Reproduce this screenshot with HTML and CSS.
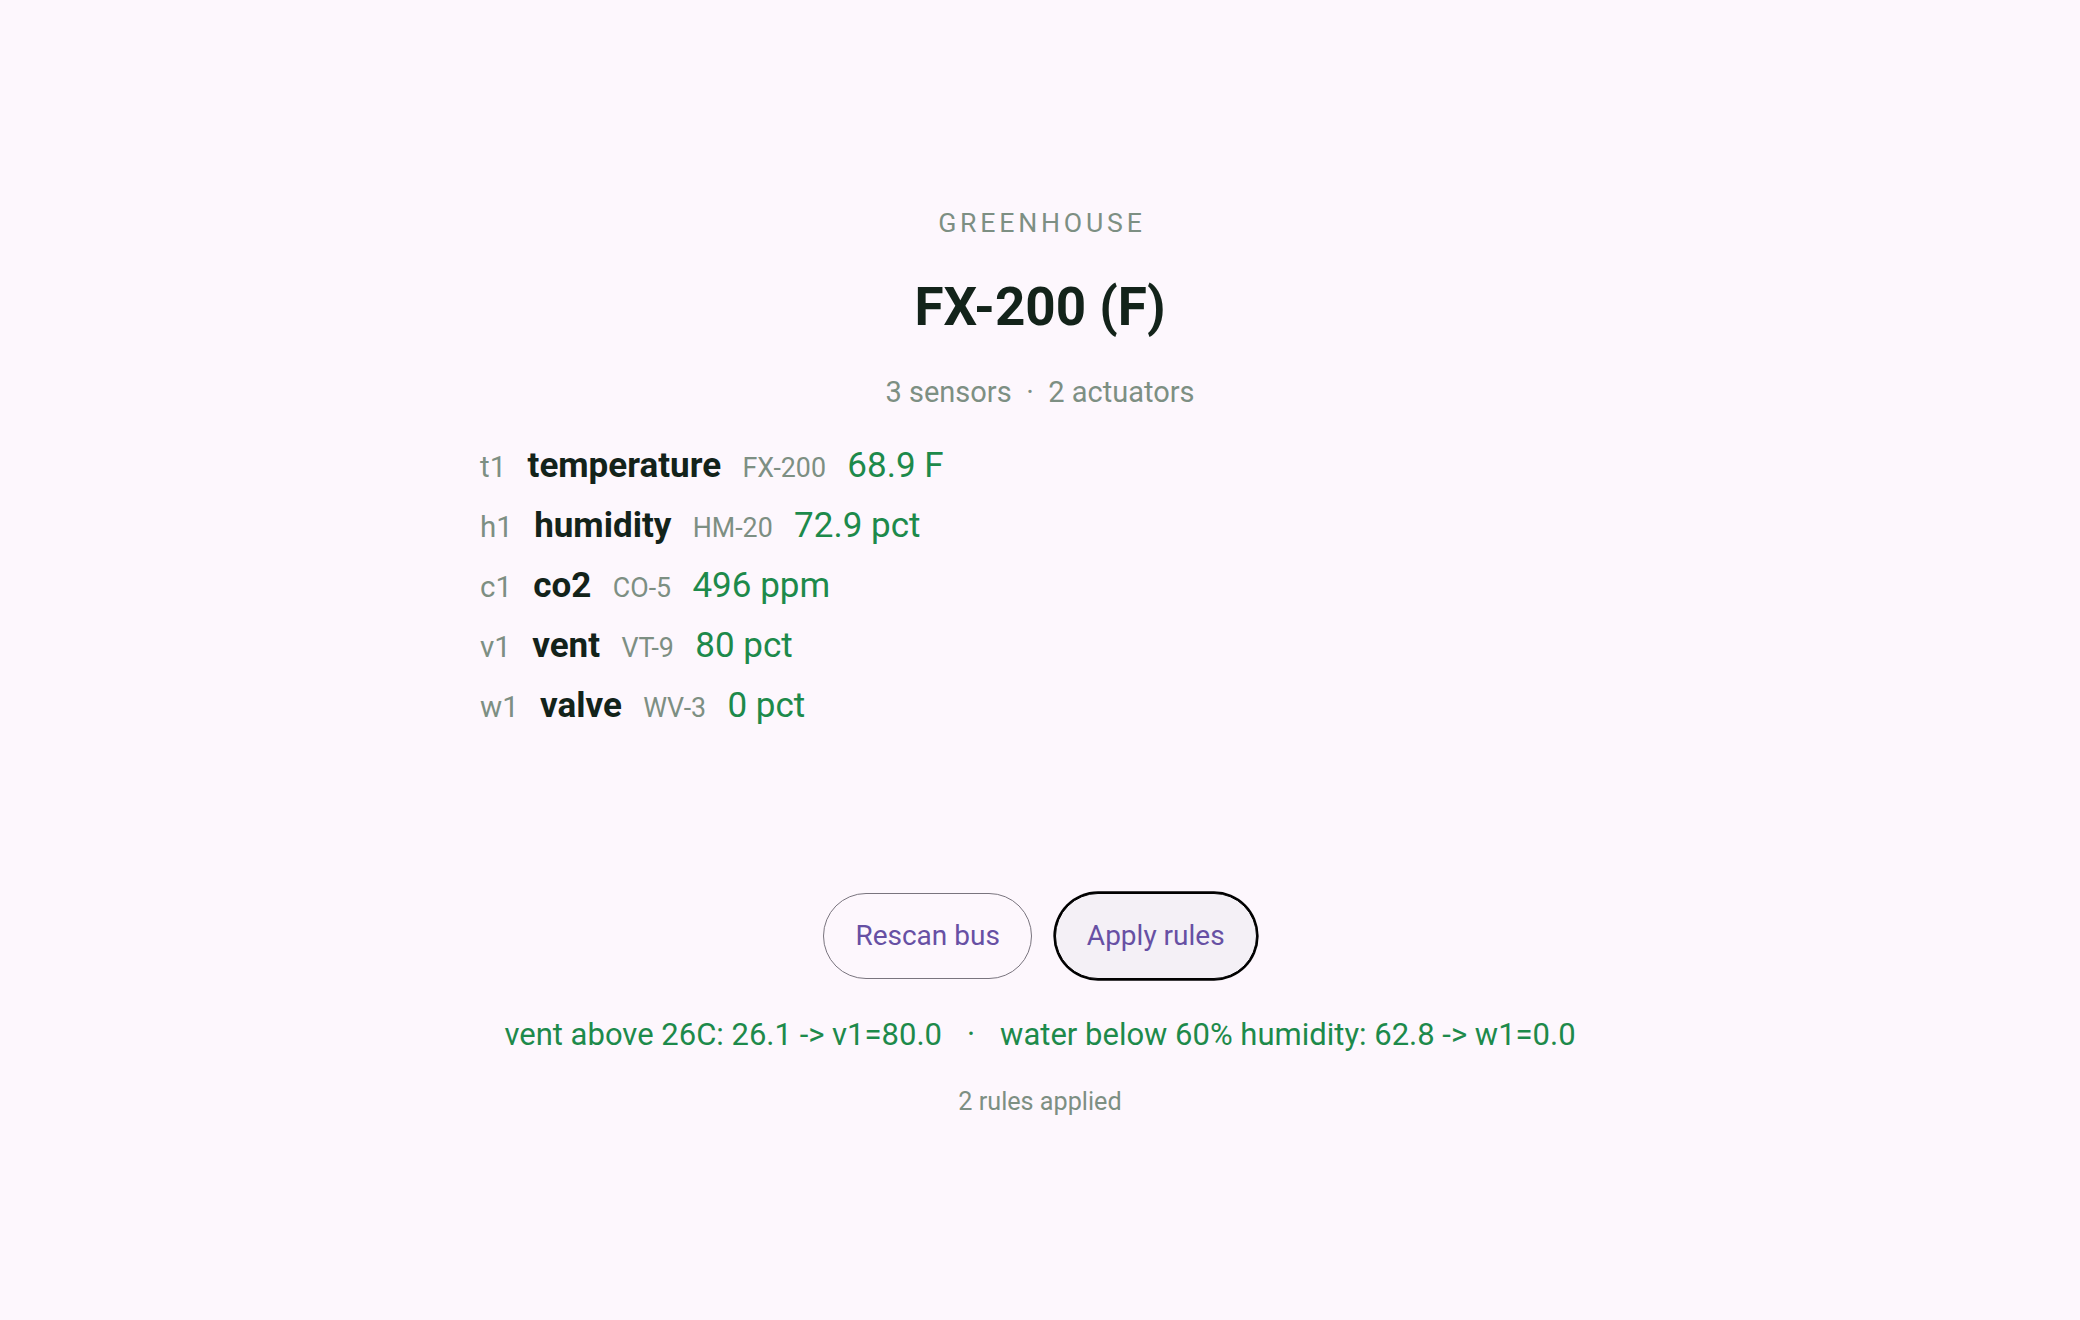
FILE: index.html
```html
<!DOCTYPE html>
<html lang="en">
<head>
<meta charset="utf-8">
<title>Greenhouse – FX-200 (F)</title>
<link rel="stylesheet" href="styles.css">
</head>
<body>
<main class="panel">
  <div class="eyebrow">GREENHOUSE</div>
  <h1 class="title">FX-200 (F)</h1>
  <div class="summary"><span>3 sensors</span><span class="sep">·</span><span>2 actuators</span></div>

  <ul class="devices">
    <li class="device"><span class="id">t1</span><span class="name">temperature</span><span class="model">FX-200</span><span class="value">68.9 F</span></li>
    <li class="device"><span class="id">h1</span><span class="name">humidity</span><span class="model">HM-20</span><span class="value">72.9 pct</span></li>
    <li class="device"><span class="id">c1</span><span class="name">co2</span><span class="model">CO-5</span><span class="value">496 ppm</span></li>
    <li class="device"><span class="id">v1</span><span class="name">vent</span><span class="model">VT-9</span><span class="value">80 pct</span></li>
    <li class="device"><span class="id">w1</span><span class="name">valve</span><span class="model">WV-3</span><span class="value">0 pct</span></li>
  </ul>

  <div class="actions">
    <button class="btn" type="button">Rescan bus</button>
    <button class="btn btn-focus" type="button">Apply rules</button>
  </div>

  <div class="rules"><span>vent above 26C: 26.1 -&gt; v1=80.0</span><span class="sep">·</span><span>water below 60% humidity: 62.8 -&gt; w1=0.0</span></div>
  <div class="count">2 rules applied</div>
</main>
</body>
</html>
```

FILE: styles.css
```css
html, body {
  margin: 0;
  padding: 0;
  background: #fdf7fd;
}

body {
  font-family: Roboto, "Noto Sans", "Liberation Sans", sans-serif;
  color: #13231a;
}

.panel {
  max-width: 1120px;
  margin: 0 auto;
  padding-top: 205px;
  display: flex;
  flex-direction: column;
}

.eyebrow {
  text-align: center;
  font-size: 26.67px;
  line-height: 36px;
  letter-spacing: 3.8px;
  padding-left: 3.8px;
  color: #7d8f83;
  font-weight: 400;
}

.title {
  margin: 34px 0 0;
  text-align: center;
  font-size: 53px;
  line-height: 64px;
  font-weight: 700;
  color: #13231a;
}

.summary {
  margin-top: 33px;
  text-align: center;
  font-size: 29px;
  line-height: 40px;
  color: #7d8f83;
}

.summary .sep {
  margin: 0 14.5px;
}

.devices {
  list-style: none;
  margin: 32.5px 0 0;
  padding: 0;
}

.device {
  display: flex;
  align-items: baseline;
  gap: 21.33px;
  height: 60px;
}

.device span {
  line-height: normal;
  white-space: nowrap;
}

.id {
  font-size: 29.5px;
  color: #7d8f83;
}

.name {
  font-size: 35px;
  font-weight: 700;
  color: #13231a;
}

.model {
  font-size: 26.8px;
  color: #7d8f83;
}

.value {
  font-size: 35px;
  color: #1d8a4b;
}

.actions {
  margin-top: 148.5px;
  display: flex;
  justify-content: center;
  align-items: center;
  gap: 23px;
}

.btn {
  box-sizing: border-box;
  height: 86px;
  padding: 0 31px;
  border: 1.33px solid #79747e;
  border-radius: 43px;
  background: transparent;
  font-family: Roboto, "Noto Sans", "Liberation Sans", sans-serif;
  font-size: 28px;
  font-weight: 400;
  line-height: 36px;
  color: #6750a4;
  cursor: pointer;
}

.btn-focus {
  border-color: #000;
  background: #f4f0f6;
  box-shadow: 0 0 0 1.67px #000;
}

.rules {
  margin-top: 36px;
  text-align: center;
  font-size: 31px;
  line-height: 40px;
  color: #1d8a4b;
  white-space: nowrap;
}

.rules .sep {
  margin: 0 25px;
}

.count {
  margin-top: 30px;
  text-align: center;
  font-size: 25.2px;
  line-height: 34px;
  color: #7d8f83;
}
```
